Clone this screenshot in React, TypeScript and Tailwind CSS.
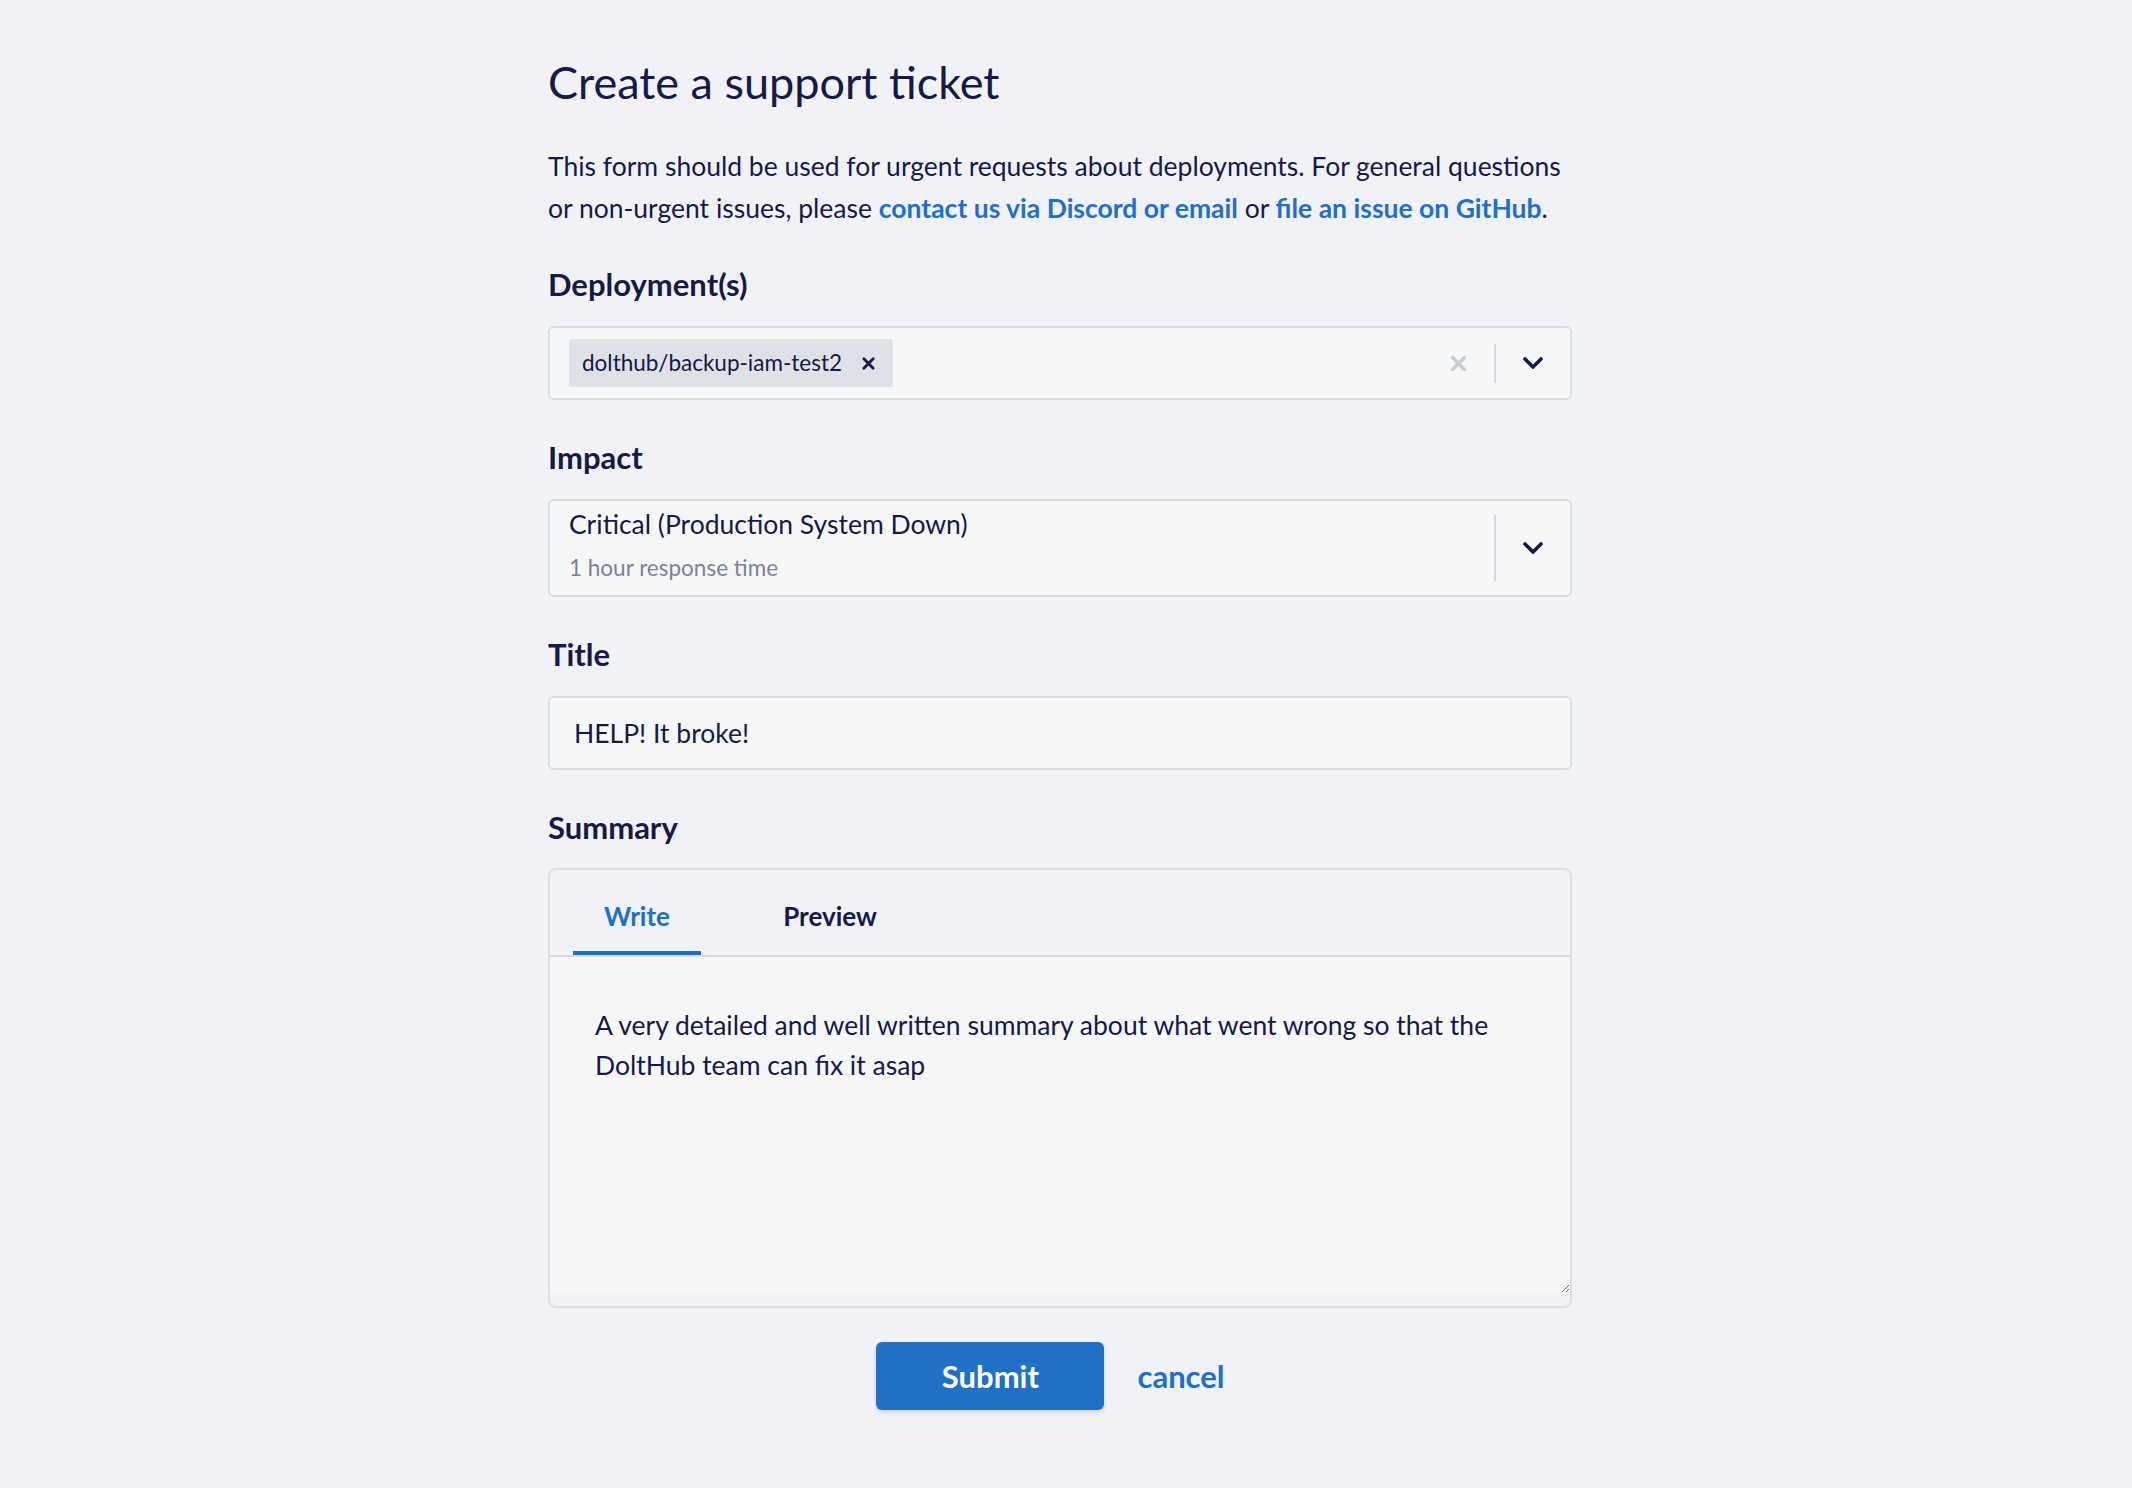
import { useState } from "react";

const Chevron = () => (
  <svg width="22" height="14" viewBox="0 0 22 14" fill="none">
    <path d="M3 3l8 8 8-8" stroke="#151a47" strokeWidth="3.6" strokeLinecap="round" strokeLinejoin="round" />
  </svg>
);

const Cross = ({ color, size }: { color: string; size: number }) => (
  <svg width={size} height={size} viewBox="0 0 16 16" fill="none">
    <path d="M3 3l10 10M13 3L3 13" stroke={color} strokeWidth="3" strokeLinecap="round" />
  </svg>
);

const Label = ({ children }: { children: React.ReactNode }) => (
  <div className="text-[31px] leading-[36px] font-bold">{children}</div>
);

const App = () => {
  const [tab, setTab] = useState("write");

  return (
    <div className="min-h-screen bg-[#f1f2f7] font-['Lato',sans-serif] text-[#151a47]">
      <div className="w-[1024px] ml-[548px] pt-[52px] pb-[78px]">
        <h1 className="text-[45px] leading-[60px]">Create a support ticket</h1>
        <p className="mt-[33px] text-[26.5px] leading-[42px]">
          This form should be used for urgent requests about deployments. For general questions
          <br />
          or non-urgent issues, please{" "}
          <a className="text-[#2170c8] font-bold" href="#">contact us via Discord or email</a> or{" "}
          <a className="text-[#2170c8] font-bold" href="#">file an issue on GitHub</a>.
        </p>

        <div className="mt-[37px]">
          <Label>Deployment(s)</Label>
          <div className="mt-[24px] h-[74px] flex items-center bg-[#f6f7f9] border-2 border-[#d9dbe2] rounded-[6px] pl-[19px] pr-[26px]">
            <div className="flex items-center h-[48px] bg-[#dfe1e8] rounded-[3px] pl-[13px] pr-[17px] gap-[19px]">
              <span className="text-[22.5px]">dolthub/backup-iam-test2</span>
              <Cross color="#151a47" size={15} />
            </div>
            <div className="flex-1" />
            <Cross color="#c9cbd2" size={19} />
            <div className="w-[2px] h-[39px] bg-[#d6d8de] ml-[26px] mr-[26px]" />
            <Chevron />
          </div>
        </div>

        <div className="mt-[39px]">
          <Label>Impact</Label>
          <div className="mt-[24px] h-[98px] flex items-center bg-[#f6f7f9] border-2 border-[#d9dbe2] rounded-[6px] pl-[19px] pr-[26px]">
            <div className="flex-1 flex flex-col pb-[7px]">
              <span className="text-[26.5px] leading-[34px]">Critical (Production System Down)</span>
              <span className="mt-[12px] text-[22.5px] leading-[30px] text-[#7c8199]">1 hour response time</span>
            </div>
            <div className="w-[2px] h-[66px] bg-[#d6d8de] mr-[26px]" />
            <Chevron />
          </div>
        </div>

        <div className="mt-[39px]">
          <Label>Title</Label>
          <input
            className="mt-[24px] w-full h-[74px] bg-[#f6f7f9] border-2 border-[#d9dbe2] rounded-[6px] px-[24px] text-[26.5px] text-[#151a47] outline-none"
            defaultValue="HELP! It broke!"
          />
        </div>

        <div className="mt-[39px]">
          <Label>Summary</Label>
          <div className="mt-[23px] h-[440px] flex flex-col border-2 border-[#dcdee4] rounded-[8px] overflow-hidden">
            <div className="h-[87px] flex items-end pl-[23px] gap-[65px] border-b-2 border-[#d9dbe2]">
              <button
                onClick={() => setTab("write")}
                className={
                  tab === "write"
                    ? "w-[128px] h-[71px] pb-[2px] flex items-center justify-center text-[26px] font-bold text-[#2170c8] border-b-4 border-[#2170c8]"
                    : "w-[128px] h-[71px] pb-[2px] flex items-center justify-center text-[26px] font-bold text-[#151a47] border-b-4 border-transparent"
                }
              >
                Write
              </button>
              <button
                onClick={() => setTab("preview")}
                className={
                  tab === "preview"
                    ? "w-[128px] h-[71px] pb-[2px] flex items-center justify-center text-[26px] font-bold text-[#2170c8] border-b-4 border-[#2170c8]"
                    : "w-[128px] h-[71px] pb-[2px] flex items-center justify-center text-[26px] font-bold text-[#151a47] border-b-4 border-transparent"
                }
              >
                Preview
              </button>
            </div>
            <textarea
              className="h-[336px] bg-[#f6f7f9] px-[45px] pt-[48px] text-[26.5px] leading-[40px] text-[#151a47] outline-none resize-y"
              defaultValue={"A very detailed and well written summary about what went wrong so that the\nDoltHub team can fix it asap"}
            />
          </div>
        </div>

        <div className="mt-[34px] flex items-center justify-center gap-[33px] pr-[19px]">
          <button className="w-[228px] h-[68px] bg-[#2170c8] text-white text-[31px] font-bold rounded-[6px] shadow-[0_2px_4px_rgba(0,0,0,0.15)]">
            Submit
          </button>
          <a href="#" className="text-[#2170c8] text-[31px] font-bold">
            cancel
          </a>
        </div>
      </div>
    </div>
  );
};

export default App;
